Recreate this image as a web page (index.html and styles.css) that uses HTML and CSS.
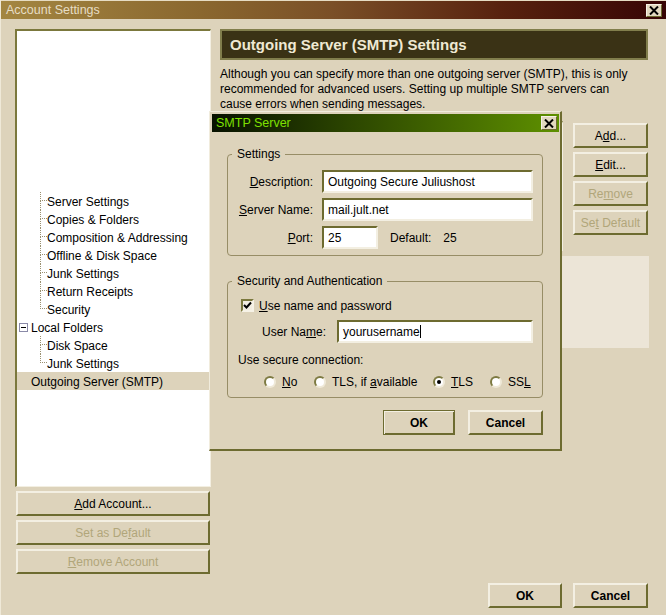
FILE: index.html
```html
<!DOCTYPE html>
<html>
<head>
<meta charset="utf-8">
<title>Account Settings</title>
<link rel="stylesheet" href="styles.css">
</head>
<body>
<div class="window">
  <div class="titlebar">
    <span class="title">Account Settings</span>
    <span class="xbtn"><svg width="10" height="9" viewBox="0 0 10 9"><path d="M1 0.5 L9 8.5 M9 0.5 L1 8.5" stroke="#000" stroke-width="2" fill="none"/></svg></span>
  </div>

  <div class="main">
    <div class="left">
      <div class="tree">
        <div class="tree-row child"><span class="conn"><i class="t"></i><i class="b"></i></span><span>Server Settings</span></div>
        <div class="tree-row child"><span class="conn"><i class="t"></i><i class="b"></i></span><span>Copies &amp; Folders</span></div>
        <div class="tree-row child"><span class="conn"><i class="t"></i><i class="b"></i></span><span>Composition &amp; Addressing</span></div>
        <div class="tree-row child"><span class="conn"><i class="t"></i><i class="b"></i></span><span>Offline &amp; Disk Space</span></div>
        <div class="tree-row child"><span class="conn"><i class="t"></i><i class="b"></i></span><span>Junk Settings</span></div>
        <div class="tree-row child"><span class="conn"><i class="t"></i><i class="b"></i></span><span>Return Receipts</span></div>
        <div class="tree-row child last"><span class="conn"><i class="t"></i><i class="b"></i></span><span>Security</span></div>
        <div class="tree-row folder"><span class="minus"><i></i></span><span>Local Folders</span></div>
        <div class="tree-row child"><span class="conn"><i class="t"></i><i class="b"></i></span><span>Disk Space</span></div>
        <div class="tree-row child last"><span class="conn"><i class="t"></i><i class="b"></i></span><span>Junk Settings</span></div>
        <div class="tree-row top selected"><span>Outgoing Server (SMTP)</span></div>
      </div>
      <button class="btn wide"><span><u>A</u>dd Account...</span></button>
      <button class="btn wide disabled"><span>Set as De<u>f</u>ault</span></button>
      <button class="btn wide disabled"><span><u>R</u>emove Account</span></button>
    </div>

    <div class="right">
      <div class="header">Outgoing Server (SMTP) Settings</div>
      <div class="desc">Although you can specify more than one outgoing server (SMTP), this is only<br>recommended for advanced users. Setting up multiple SMTP servers can<br>cause errors when sending messages.</div>
      <div class="smtp-row">
        <div class="list"></div>
        <div class="side-btns">
          <button class="btn"><span>A<u>d</u>d...</span></button>
          <button class="btn"><span><u>E</u>dit...</span></button>
          <button class="btn disabled"><span>Re<u>m</u>ove</span></button>
          <button class="btn disabled"><span>Se<u>t</u> Default</span></button>
        </div>
      </div>
      <div class="details"></div>
    </div>
  </div>

  <div class="footer">
    <button class="btn bold ok-main"><span>OK</span></button>
    <button class="btn bold cancel-main"><span>Cancel</span></button>
  </div>

  <div class="dialog">
    <div class="dlg-title">
      <span>SMTP Server</span>
      <span class="xbtn small"><svg width="10" height="9" viewBox="0 0 10 9"><path d="M1 0.5 L9 8.5 M9 0.5 L1 8.5" stroke="#000" stroke-width="2" fill="none"/></svg></span>
    </div>
    <div class="dlg-body">
      <fieldset class="group">
        <legend>Settings</legend>
        <div class="form">
          <label><u>D</u>escription:</label>
          <div class="field"><span>Outgoing Secure Juliushost</span></div>
          <label><u>S</u>erver Name:</label>
          <div class="field"><span>mail.jult.net</span></div>
          <label><u>P</u>ort:</label>
          <div class="port-row">
            <div class="field port"><span>25</span></div>
            <span class="def-label">Default:</span>
            <span class="def-value">25</span>
          </div>
        </div>
      </fieldset>

      <fieldset class="group security">
        <legend>Security and Authentication</legend>
        <div class="check-row">
          <span class="checkbox"><svg width="9" height="9" viewBox="0 0 9 9"><path d="M1 4 L3.5 6.5 L8 1.5" stroke="#000" stroke-width="2" fill="none"/></svg></span>
          <span><u>U</u>se name and password</span>
        </div>
        <div class="user-row">
          <label>User Na<u>m</u>e:</label>
          <div class="field user"><span>yourusername</span><span class="caret"></span></div>
        </div>
        <div class="secure-label">Use secure connection:</div>
        <div class="radio-row">
          <span class="opt"><span class="radio"></span><span><u>N</u>o</span></span>
          <span class="opt"><span class="radio"></span><span>TLS, if <u>a</u>vailable</span></span>
          <span class="opt"><span class="radio on"></span><span><u>T</u>LS</span></span>
          <span class="opt"><span class="radio"></span><span>SS<u>L</u></span></span>
        </div>
      </fieldset>

      <div class="dlg-buttons">
        <button class="btn bold default ok-dlg"><span>OK</span></button>
        <button class="btn bold cancel-dlg"><span>Cancel</span></button>
      </div>
    </div>
  </div>
</div>
</body>
</html>
```

FILE: styles.css
```css
* { box-sizing: border-box; }

html, body {
  margin: 0;
  padding: 0;
  background: #ddd3bb;
}

body {
  font-family: "Liberation Sans", Arial, sans-serif;
  font-size: 12px;
  color: #000;
}

u { text-underline-offset: 1px; }

.window {
  position: relative;
  width: 666px;
  height: 615px;
  display: flex;
  flex-direction: column;
  background: #ddd3bb;
  border-left: 1px solid #efe9d8;
  overflow: hidden;
}

/* ---------- title bar ---------- */
.titlebar {
  height: 19px;
  flex: none;
  border-top: 1px solid #e6dcc3;
  background: linear-gradient(to right, #a38641 0%, #8a672f 30%, #7a4f27 50%, #58220f 75%, #370505 100%);
  display: flex;
  align-items: center;
  justify-content: space-between;
  padding: 0 4px 0 5px;
}

.title {
  color: #e6ddc5;
  font-size: 12.5px;
}

.xbtn {
  width: 16px;
  height: 13px;
  background: #e2d8bf;
  border: 1px solid;
  border-color: #f6f2e6 #6d6b30 #6d6b30 #f6f2e6;
  display: flex;
  align-items: center;
  justify-content: center;
}

.xbtn svg { display: block; }

/* ---------- main area ---------- */
.main {
  flex: 1;
  display: flex;
  gap: 9px;
  padding: 10px 0 0 14px;
}

.left {
  width: 196px;
  display: flex;
  flex-direction: column;
  gap: 4px;
}

.tree {
  height: 458px;
  background: #fff;
  border-style: solid;
  border-width: 2px 1px 1px 2px;
  border-color: #7b783d #f3efe2 #f3efe2 #7b783d;
  padding-top: 161px;
}

.tree-row {
  height: 18px;
  display: flex;
  align-items: center;
  white-space: nowrap;
  padding-top: 1px;
}

.tree-row.child { padding-left: 23px; }
.tree-row.folder { padding-left: 2px; }
.tree-row.top { padding-left: 14px; }
.tree-row.selected { background: #ddd3bb; }

.conn {
  width: 7px;
  height: 18px;
  margin-top: -1px;
  flex: none;
  display: flex;
  flex-direction: column;
}

.conn i { display: block; }

.conn .t {
  height: 9px;
  border-left: 1px dotted #9a9070;
  border-bottom: 1px dotted #9a9070;
}

.conn .b {
  flex: 1;
  border-left: 1px dotted #9a9070;
}

.last .conn .b { border-left: none; }

.minus {
  width: 9px;
  height: 9px;
  margin-right: 3px;
  margin-top: -1px;
  border: 1px solid #8a8aa8;
  background: #fff;
  display: flex;
  align-items: center;
  justify-content: center;
  flex: none;
}

.minus i {
  display: block;
  width: 5px;
  height: 1px;
  background: #000;
}

/* ---------- buttons ---------- */
.btn {
  height: 25px;
  display: flex;
  align-items: center;
  justify-content: center;
  background: #ddd3bb;
  border-style: solid;
  border-width: 2px;
  border-color: #f3efe2 #6d6b30 #6d6b30 #f3efe2;
  font: inherit;
  color: #000;
  padding: 0;
  margin: 0;
  white-space: nowrap;
}

.btn.disabled { color: #b1a67a; }
.btn.bold { font-weight: bold; }

.btn.wide {
  width: 194px;
  margin-left: 1px;
}

/* ---------- right column ---------- */
.right {
  width: 428px;
  display: flex;
  flex-direction: column;
}

.header {
  height: 31px;
  background: #3a3215;
  border: 2px solid #817e4c;
  color: #efe9d3;
  font-weight: bold;
  font-size: 15px;
  padding-left: 8px;
  display: flex;
  align-items: center;
}

.desc {
  margin-top: 7px;
  line-height: 15px;
  white-space: nowrap;
}

.smtp-row {
  display: flex;
  margin-top: 9px;
  height: 130px;
}

.list {
  width: 343px;
  background: #fff;
  border-style: solid;
  border-width: 2px 1px 1px 2px;
  border-color: #7b783d #f3efe2 #f3efe2 #7b783d;
}

.side-btns {
  margin-left: 10px;
  width: 75px;
  padding-top: 2px;
  display: flex;
  flex-direction: column;
  gap: 4px;
}

.details {
  margin-top: 5px;
  height: 92px;
  margin-right: -1px;
  background: #ece5d7;
}

/* ---------- footer ---------- */
.footer {
  flex: none;
  display: flex;
  justify-content: flex-end;
  gap: 11px;
  padding: 0 18px 7px 0;
}

.ok-main { width: 74px; }
.cancel-main { width: 75px; }

/* ---------- dialog ---------- */
.dialog {
  position: absolute;
  left: 208px;
  top: 111px;
  width: 353px;
  height: 340px;
  background: #ddd3bb;
  border-style: solid;
  border-width: 1px 2px 2px 1px;
  border-color: #f1ecdd #6d6b30 #6d6b30 #f1ecdd;
  padding: 2px 1px 1px 2px;
}

.dlg-title {
  height: 18px;
  background: linear-gradient(to right, #071100 0%, #2c4600 40%, #5e9000 100%);
  color: #7fe000;
  font-size: 12.5px;
  display: flex;
  align-items: center;
  justify-content: space-between;
  padding: 0 2px 0 4px;
}

.xbtn.small { height: 14px; }

.dlg-body {
  padding: 15px 16px 0 15px;
}

.group {
  margin: 0;
  border: 1px solid #978d66;
  border-radius: 4px;
  padding: 9px 9px 6px 0;
  min-width: 0;
}

.group legend {
  padding: 0 5px;
  margin-left: 4px;
  line-height: 14px;
}

.form {
  display: grid;
  grid-template-columns: 85px 211px;
  column-gap: 9px;
  row-gap: 5px;
}

.form label {
  text-align: right;
  align-self: center;
  white-space: nowrap;
}

.field {
  height: 23px;
  background: #fff;
  border-style: solid;
  border-width: 2px;
  border-color: #6d6b30 #f3efe2 #f3efe2 #6d6b30;
  padding-left: 4px;
  display: flex;
  align-items: center;
  white-space: nowrap;
}

.port-row {
  display: flex;
  align-items: center;
}

.field.port { width: 56px; }
.def-label { margin-left: 12px; }
.def-value { margin-left: 12px; }

.group.security {
  margin-top: 18px;
  padding: 10px 0 8px 0;
}

.check-row {
  height: 15px;
  display: flex;
  align-items: center;
  padding-left: 13px;
}

.checkbox {
  width: 13px;
  height: 13px;
  margin-right: 5px;
  background: #f2ede0;
  border-style: solid;
  border-width: 2px;
  border-color: #7b783d #f6f2e6 #f6f2e6 #7b783d;
  display: flex;
  align-items: center;
  justify-content: center;
}

.checkbox svg { display: block; }

.user-row {
  margin-top: 7px;
  display: flex;
  align-items: center;
  padding-left: 34px;
}

.user-row label { width: 75px; }

.field.user { width: 196px; }

.caret {
  display: inline-block;
  width: 1px;
  height: 13px;
  background: #000;
}

.secure-label {
  margin-top: 10px;
  line-height: 14px;
  padding-left: 10px;
}

.radio-row {
  margin-top: 8px;
  height: 14px;
  display: grid;
  grid-template-columns: 50px 119px 57px auto;
  padding-left: 36px;
  align-items: center;
}

.opt {
  display: flex;
  align-items: center;
  white-space: nowrap;
}

.radio {
  width: 12px;
  height: 12px;
  flex: none;
  border-radius: 50%;
  background: #fff;
  border: 2px solid;
  border-color: #7d7a42 #efe9d8 #efe9d8 #7d7a42;
  margin-right: 6px;
  display: flex;
  align-items: center;
  justify-content: center;
}

.radio.on::after {
  content: "";
  width: 4px;
  height: 4px;
  border-radius: 50%;
  background: #000;
}

.dlg-buttons {
  margin-top: 12px;
  display: flex;
  justify-content: flex-end;
  gap: 13px;
}

.ok-dlg { width: 72px; }
.cancel-dlg { width: 75px; }

.btn.default {
  border: 1px solid #6d6b30;
  box-shadow: inset 1px 1px 0 #f3efe2, inset -1px -1px 0 #6d6b30;
}
```
